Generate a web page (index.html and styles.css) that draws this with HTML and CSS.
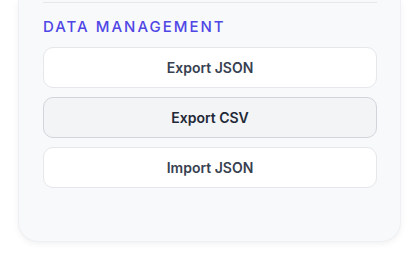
FILE: index.html
```html
<html>
    <head>
        <link rel="stylesheet" href="styles.css">
    </head>
    <body>
        <div class="card">
            <div class="divider"></div>
            <h3>Data Management</h3>
            <div class="actions">
                <a href="#" class="button">Export JSON</a>
                <a href="#" class="button active">Export CSV</a>
                <a href="#" class="button">Import JSON</a>
            </div>
        </div>
    </body>
</html>
```

FILE: styles.css
```css
html, body {
    font-family: Inter, "Noto Sans", sans-serif;
    background: #fff;
    margin: 0;
}
body {
    padding: 0 18px;
}
.card {
    background: #f8f9fb;
    border: 1px solid #eef0f3;
    border-top: none;
    border-radius: 0 0 20px 20px;
    box-shadow: 0 2px 6px rgba(15, 23, 42, 0.06);
    padding: 2px 23px 53px 24px;
}
.divider {
    height: 1px;
    background: #e5e7eb;
}
h3 {
    margin: 15px 0 11px 0;
    font-size: 15px;
    line-height: 18px;
    font-weight: 500;
    letter-spacing: 2px;
    text-transform: uppercase;
    color: #4f46e5;
}
.actions {
    display: flex;
    flex-direction: column;
    gap: 9px;
}
.button {
    display: block;
    height: 41px;
    line-height: 39px;
    box-sizing: border-box;
    text-align: center;
    text-decoration: none;
    font-size: 14px;
    font-weight: 600;
    color: #374151;
    background: #fff;
    border: 1px solid #e5e7eb;
    border-radius: 10px;
}
.button.active {
    background: #f3f4f6;
    border-color: #d1d5db;
    color: #1f2937;
}
```
